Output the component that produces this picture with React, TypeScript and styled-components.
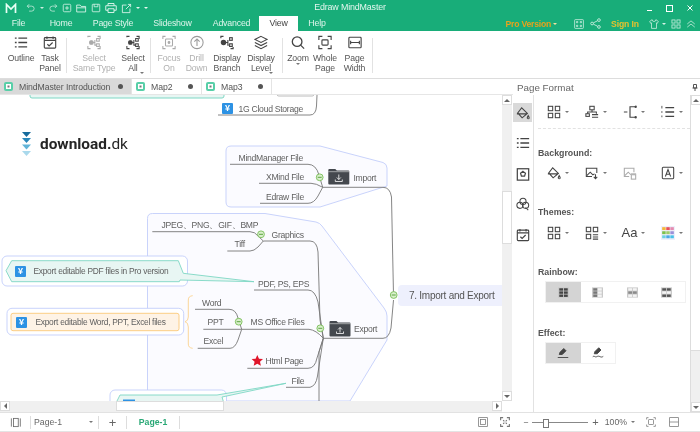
import React from "react";
import styled, { createGlobalStyle } from "styled-components";

const Global = createGlobalStyle`
  html, body { margin: 0; padding: 0; background: #fff; }
  * { box-sizing: border-box; }
`;

const FONT = `"Liberation Sans", "Noto Sans", sans-serif`;

const Window = styled.div`
  width: 700px; height: 432px; display: flex; flex-direction: column; overflow: hidden;
  background: #fff; font-family: ${FONT}; color: #555; filter: blur(0.35px);
`;
const Spacer = styled.span<{ $w: number }>`width: ${p => p.$w}px; flex: none;`;
const TitleBar = styled.div`
  height: 16px; background: #18ad79; display: flex; align-items: center; padding-left: 5px; position: relative;
`;
const QuickTools = styled.div`display: flex; align-items: center; gap: 4px; margin-left: 9px;`;
const TitleText = styled.div`
  position: absolute; left: 0; right: 0; top: 0; text-align: center; color: #e4f7ef; font-size: 8.9px; letter-spacing: -0.15px; line-height: 15px;
`;
const WinButtons = styled.div`margin-left: auto; display: flex; align-items: center; gap: 14px; padding-right: 7px;`;
const MenuBar = styled.div`height: 15px; background: #18ad79; display: flex; align-items: flex-end; font-size: 8.8px; letter-spacing: -0.2px;`;
const MenuTab = styled.div<{ $w: number; $active?: boolean }>`
  width: ${p => p.$w}px; height: 15px; text-align: center; line-height: 15px;
  color: ${p => (p.$active ? "#444" : "#dff5ec")}; background: ${p => (p.$active ? "#fff" : "transparent")};
`;
const MenuRight = styled.div`margin-left: auto; height: 15px; display: flex; align-items: center; padding-right: 4px;`;
const Pro = styled.span`color: #e8a21c; font-weight: 700; font-size: 8.6px; margin-right: 2px;`;
const SignIn = styled.span`color: #e6c22f; font-weight: 700; font-size: 8.6px; letter-spacing: -0.1px; margin: 0 10px 0 10px;`;
const Caret = styled.span<{ $c?: string; $hidden?: boolean }>`
  display: inline-block; width: 0; height: 0; border-left: 2px solid transparent; border-right: 2px solid transparent;
  border-top: 2px solid ${p => p.$c || "#777"}; visibility: ${p => (p.$hidden ? "hidden" : "visible")};
`;
const Ribbon = styled.div`height: 48px; display: flex; border-bottom: 1px solid #ddd; padding: 4px 0 0 4px;`;
const RibbonItem = styled.div<{ $w: number; $off?: boolean }>`
  width: ${p => p.$w}px; height: 42px; display: flex; flex-direction: column; align-items: center;
  font-size: 8.7px; letter-spacing: -0.12px; line-height: 10px; color: ${p => (p.$off ? "#b0b0b0" : "#555")}; text-align: center; white-space: nowrap; position: relative;
  svg { margin-bottom: 3px; height: 15px; flex: none; }
`;
const RibbonSep = styled.div<{ $ml?: number }>`width: 1px; height: 35px; background: #e2e2e2; margin: 3px 0 0 ${p => p.$ml ?? 0}px;`;
const SmallCaret = styled(Caret)`position: absolute; bottom: 3px; right: 1px;`;

const Work = styled.div`flex: 1; min-height: 0; display: flex;`;
const Left = styled.div`width: 513px; display: flex; flex-direction: column;`;
const TabBar = styled.div`height: 16px; display: flex; border-bottom: 1px solid #e6e6e6; font-size: 8.7px; letter-spacing: -0.08px;`;
const DocTab = styled.div<{ $w: number; $active?: boolean }>`
  width: ${p => p.$w}px; display: flex; align-items: center; padding-left: 4px; gap: 6px; color: #555;
  background: ${p => (p.$active ? "#d9d9d9" : "#fff")}; border-right: 1px solid #e4e4e4; white-space: nowrap;
`;
const Dot = styled.span`width: 5px; height: 5px; border-radius: 50%; background: #555; margin-left: auto; margin-right: 8px;`;
const CanvasRow = styled.div`flex: 1; display: flex; min-height: 0;`;
const Canvas = styled.div`width: 502px; position: relative; overflow: hidden; background: #fff;`;
const Wires = styled.svg`position: absolute; left: 0; top: 0;`;
const NodeText = styled.div<{ $x: number; $y: number; $s?: number; $c?: string }>`
  position: absolute; left: ${p => p.$x}px; top: ${p => p.$y - 95}px; transform: translateY(-50%);
  font-size: ${p => p.$s ?? 8.6}px; letter-spacing: -0.27px; color: ${p => p.$c ?? "#5f5f5f"}; white-space: nowrap; line-height: 12px;
`;
const RootNode = styled.div`
  position: absolute; left: 398px; top: 190px; width: 104px; height: 21px; background: #eef0fd; border-radius: 4px 0 0 4px;
  font-size: 10px; letter-spacing: -0.26px; line-height: 21px; color: #555; padding-left: 11px; white-space: nowrap;
`;
const Yuan = styled.div<{ $x: number; $y: number; $s?: number }>`
  position: absolute; left: ${p => p.$x}px; top: ${p => p.$y - 95}px; width: ${p => p.$s ?? 11}px; height: ${p => p.$s ?? 11}px;
  background: #2d92e4; color: #fff; font: 700 9px/11px "Liberation Sans", sans-serif; text-align: center; border-radius: 1px;
`;
const Logo = styled.div`
  position: absolute; left: 40px; top: 38px; font: 700 15.4px/22px Roboto, sans-serif; color: #252525;
  span { font-weight: 400; }
`;
const VScroll = styled.div`width: 11px; background: #f0f0f0; display: flex; flex-direction: column; border-right: 1px solid #fff;`;
const Arrow = styled.div<{ $dir: "up" | "down" | "left" | "right" }>`
  width: 10px; height: 10px; flex: none; background: #fff; border: 1px solid #ddd; display: flex; align-items: center; justify-content: center;
  &::after {
    content: ""; width: 0; height: 0; border: 3px solid transparent;
    ${p => p.$dir === "up" && "border-bottom: 3px solid #666; border-top-width: 0;"}
    ${p => p.$dir === "down" && "border-top: 3px solid #666; border-bottom-width: 0;"}
    ${p => p.$dir === "left" && "border-right: 3px solid #666; border-left-width: 0;"}
    ${p => p.$dir === "right" && "border-left: 3px solid #666; border-right-width: 0;"}
  }
`;
const Track = styled.div<{ $size: number; $fill?: boolean }>`
  flex: ${p => (p.$fill ? 1 : "none")}; ${p => (p.$fill ? "" : `height: ${p.$size}px;`)} min-height: 0;
`;
const Thumb = styled.div<{ $size: number }>`height: ${p => p.$size}px; flex: none; background: #fff; border: 1px solid #ddd;`;
const HScroll = styled.div`height: 11px; background: #f0f0f0; display: flex; width: 502px; padding-bottom: 1px;`;
const HThumb = styled.div`margin-left: 106px; width: 108px; background: #fff; border: 1px solid #ddd;`;

const Right = styled.div`flex: 1; display: flex; flex-direction: column; min-width: 0;`;
const PanelHead = styled.div`height: 16px; display: flex; align-items: center; padding: 0 2px 0 4px; font-size: 9.8px; color: #666; justify-content: space-between;`;
const PanelBody = styled.div`flex: 1; min-height: 0; display: flex;`;
const SideRail = styled.div`width: 21px; border-right: 1px solid #e2e2e2; display: flex; flex-direction: column; padding-top: 8px; gap: 11.5px;`;
const RailBtn = styled.div<{ $active?: boolean }>`
  width: 19px; height: 19px; display: flex; align-items: center; justify-content: center; background: ${p => (p.$active ? "#d9d9d9" : "transparent")};
`;
const Panel = styled.div`flex: 1; display: flex; flex-direction: column; padding: 8px 0 0 3px; min-width: 0;`;
const ToolRow = styled.div<{ $mt?: number }>`display: grid; grid-template-columns: repeat(4, 38px); margin-top: ${p => p.$mt ?? 0}px; height: 18px;`;
const Tool = styled.div`display: flex; align-items: center; justify-content: center; gap: 4px; padding-left: 3px;`;
const FontGlyph = styled.span`font-size: 13px; line-height: 14px; color: #444;`;
const Dashed = styled.div`border-top: 1px dashed #e2e2e2; margin: 7px 0 0 1px;`;
const Section = styled.div<{ $mt: number }>`font-size: 8.8px; font-weight: 700; color: #555; margin: ${p => p.$mt}px 0 0 1px; line-height: 12px;`;
const Seg = styled.div<{ $w: number; $mt?: number }>`
  width: ${p => p.$w}px; height: 22px; display: flex; margin: ${p => p.$mt ?? 4}px 0 0 8px; border: 1px solid #f1f1f1; padding: 0;
`;
const SegCell = styled.div<{ $active?: boolean }>`
  width: 34.5px; height: 20px; display: flex; align-items: center; justify-content: center; background: ${p => (p.$active ? "#d4d4d4" : "transparent")};
`;
const RScroll = styled.div`width: 10px; background: #f0f0f0; border-left: 1px solid #ddd; display: flex; flex-direction: column;`;
const RTrack = styled.div`height: 246px; background: #fff; border-bottom: 1px solid #ddd; flex: none;`;

const Status = styled.div`
  height: 20px; border-top: 1px solid #e2e2e2; border-bottom: 1px solid #e4e4e4; display: flex; align-items: center; font-size: 8.7px; color: #666; position: relative;
`;
const StatSep = styled.div`width: 1px; height: 13px; background: #ddd;`;
const StatCell = styled.div<{ $w: number; $c?: string; $b?: boolean }>`
  width: ${p => p.$w}px; display: flex; align-items: center; justify-content: center; color: ${p => p.$c ?? "inherit"}; font-weight: ${p => (p.$b ? 700 : 400)};
`;
const PagePicker = styled.div`width: 67px; display: flex; align-items: center; justify-content: space-between; padding: 0 5px 0 3px;`;
const AddPage = styled.div`width: 27px; text-align: center; font-size: 13px;`;
const StatRight = styled.div`margin-left: auto; display: flex; align-items: center; padding-right: 21px;`;
const PlusSign = styled.span`font-size: 11px;`;
const Slider = styled.div`width: 56px; height: 1px; background: #888; position: relative; margin: 0 4px;
  &::after { content: ""; position: absolute; left: 11px; top: -3px; width: 4px; height: 7px; background: #fff; border: 1px solid #777; }
`;

type P = { children: React.ReactNode; s?: number; c?: string; w?: number };
const G = ({ children, s = 14, c = "#444", w = 1.2 }: P) => (
  <svg width={s} height={s} viewBox="0 0 16 16" fill="none" stroke={c} strokeWidth={w}>{children}</svg>
);

const boxes = <><rect x="1.5" y="1.5" width="5" height="5" /><rect x="9.5" y="1.5" width="5" height="5" /><rect x="1.5" y="9.5" width="5" height="5" /><rect x="9.5" y="9.5" width="5" height="5" /></>;
const Ico = {
  outline: (c?: string) => <G c={c} w={1.5}><path d="M5 3h10M5 8h10M5 13h10M1 3h2M1 8h2M1 13h2" /></G>,
  task: (c?: string) => <G c={c} w={1.3}><rect x="1.5" y="2.5" width="13" height="12" rx="1" /><path d="M1.5 5.5h13M4.5 1v3M11.5 1v3M5 10l2 2 4-4" /></G>,
  sel: (c?: string) => <G c={c}><path d="M1 2V1h3M12 1h3v3M15 12v3h-3M4 15H1v-3" /><rect x="3" y="6" width="4" height="4" rx="1.5" fill={c} /><path d="M7 8h2M9 5v6h2" /><rect x="11" y="3.5" width="3" height="3" /><rect x="11" y="9.5" width="3" height="3" /></G>,
  focus: (c?: string) => <G c={c}><path d="M1 4V1h3M12 1h3v3M15 12v3h-3M4 15H1v-3" /><rect x="4" y="4" width="8" height="8" rx="1" /><circle cx="8" cy="8" r="1" fill={c} /></G>,
  drill: (c?: string) => <G c={c}><circle cx="8" cy="8" r="7" /><path d="M8 12V4.5M5 7l3-3 3 3" /></G>,
  branch: (c?: string) => <G c={c} w={1.3}><circle cx="4" cy="8" r="2.5" fill={c} /><path d="M6 8h3M9 5v6h1" /><rect x="11" y="2.5" width="3" height="3" /><rect x="11" y="9.5" width="3" height="3" /><path d="M1 3V1h3" /><path d="M12 15h3v-2" /></G>,
  layers: (c?: string) => <G c={c}><path d="M8 1l7 3.5L8 8 1 4.5zM1 8l7 3.5L15 8M1 11.5L8 15l7-3.5" /></G>,
  zoom: (c?: string) => <G c={c} w={1.5}><circle cx="7" cy="7" r="5.5" /><path d="M11 11l4 4" /></G>,
  whole: (c?: string) => <G c={c} w={1.3}><path d="M1 5V1h4M11 1h4v4M15 11v4h-4M5 15H1v-4" /><rect x="4.5" y="5" width="7" height="6" rx="1" /></G>,
  width: (c?: string) => <G c={c} w={1.3}><rect x="1" y="2" width="14" height="12" rx="1" /><path d="M3 8h10M3 6v4M13 6v4" /></G>,
  bucket: (c?: string) => <G c={c} w={1.3}><path d="M6.5 2L2 8l5 5.5 6-5zM1 9h11" /><path d="M14 11c-1 1.5-1.5 2-1 3 .5.7 1.5.7 2 0 .3-1-.3-1.5-1-3z" fill={c} /></G>,
  org: (c?: string) => <G c={c}><rect x="5.5" y="1.5" width="5" height="4" /><path d="M8 5.5V8M3 10V8h10v2" /><rect x="1" y="10" width="4" height="3" /><path d="M8 11h7M8 14h7" /></G>,
  bracket: (c?: string) => <G c={c} w={1.3}><path d="M1 8h4M14 2H8v12h6" /><circle cx="14.5" cy="2" r=".7" fill={c} /><circle cx="14.5" cy="14" r=".7" fill={c} /></G>,
  numlist: (c?: string) => <G c={c} w={1.5}><path d="M5 3h10M5 8h10M5 13h10" /><path d="M1 1v3M1 7v2M1 12v2" strokeWidth={1} /></G>,
  imgdown: (c?: string) => <G c={c}><path d="M8 12H1.5V2.5h12V8" /><path d="M2 11l4-4 3 3 2-1" /><path d="M12 9.5v5M10 12.5l2 2 2-2" /></G>,
  imgdel: (c?: string) => <G c={c}><path d="M7 12H1.5V2.5h11V7" /><path d="M2 11l4-4 3 3" /><rect x="9.5" y="10" width="5" height="5" /><path d="M9 9h6" /></G>,
  textbox: (c?: string) => <G c={c}><rect x="1.5" y="1.5" width="13" height="13" rx="1" /><path d="M5 12l3-8 3 8M6 9.5h4" /></G>,
  boxlist: (c?: string) => <G c={c}><rect x="1.5" y="1.5" width="5" height="5" /><rect x="9.5" y="1.5" width="5" height="5" /><rect x="1.5" y="9.5" width="5" height="5" /><path d="M9 10h6M9 12.5h6M9 15h6" /></G>,
  palette: () => (
    <svg width="14" height="14" viewBox="0 0 12 12"><rect width="12" height="12" fill="#eef0fb" />
      <rect x="1" y="1" width="3" height="2.5" fill="#f5b73a" /><rect x="4.5" y="1" width="3" height="2.5" fill="#e8505b" /><rect x="8" y="1" width="3" height="2.5" fill="#e58bb0" />
      <rect x="1" y="4.5" width="3" height="2.5" fill="#7cc04b" /><rect x="4.5" y="4.5" width="3" height="2.5" fill="#9ecb6a" /><rect x="8" y="4.5" width="3" height="2.5" fill="#9b8fd8" />
      <rect x="1" y="8" width="3" height="2.5" fill="#6cd0e0" /><rect x="4.5" y="8" width="3" height="2.5" fill="#4aa8e8" /><rect x="8" y="8" width="3" height="2.5" fill="#48c0e8" />
    </svg>
  ),
  rail_star: (c?: string) => <G c={c} w={1.4}><rect x="1.5" y="2" width="13" height="13" /><path d="M8 5l2.8 2.2-1 3.3H6.2l-1-3.3z" /></G>,
  clover: (c?: string) => <G c={c}><circle cx="8" cy="5" r="3.5" /><circle cx="4.5" cy="9.5" r="3.5" /><circle cx="11" cy="9.5" r="3.5" /><path d="M11 12l3 3" /></G>,
};

const Rainbow = ({ v }: { v: number }) => {
  const dark = ["#444", "#777", "#8a8a8a", "#555"][v], light = "#c9c9c9";
  const on = [
    [1, 1, 1, 1, 1, 1],
    [1, 0, 1, 0, 1, 0],
    [0, 0, 1, 1, 0, 0],
    [1, 1, 0, 0, 1, 1],
  ][v];
  return (
    <svg width="11" height="11" viewBox="0 0 13 12">
      <rect width="13" height="12" fill={light} />
      {on.map((o, i) => (
        <rect key={i} x={i % 2 ? 7 : 1.5} y={1 + Math.floor(i / 2) * 3.7} width="4.5" height="2.8" fill={o ? dark : "#f4f4f4"} />
      ))}
    </svg>
  );
};

const ToolBtn = ({ icon, caret = true }: { icon: React.ReactNode; caret?: boolean }) => (
  <Tool>{icon}<Caret $hidden={!caret} /></Tool>
);

const TabIcon = () => (
  <svg width="9" height="9" viewBox="0 0 9 9"><rect width="9" height="9" rx="2" fill="#58cfa8" /><rect x="2" y="2" width="5" height="5" fill="#fff" /><rect x="3.5" y="3.5" width="2" height="2" fill="#777" /></svg>
);

const Collapse = ({ x, y }: { x: number; y: number }) => (
  <g><circle cx={x} cy={y} r="3.4" fill="#d9f0cc" stroke="#79bd58" strokeWidth="0.9" /><path d={`M${x - 2} ${y}h4`} stroke="#4f9a33" strokeWidth="0.9" /></g>
);
const Folder = ({ x, y, up }: { x: number; y: number; up?: boolean }) => (
  <g transform={`translate(${x} ${y})`}>
    <path d="M0 2.5a1 1 0 0 1 1-1h6l1.5 1.5H20a1 1 0 0 1 1 1V16a1 1 0 0 1-1 1H1a1 1 0 0 1-1-1z" fill="#44484e" />
    <path d="M0 4.2h21" stroke="#fff" strokeWidth="0.5" />
    <path d={up ? "M10.5 13V8M8.5 10l2-2 2 2M7 12v2h7v-2" : "M10.5 7v5M8.5 10l2 2 2-2M7 12v2h7v-2"} stroke="#fff" strokeWidth="0.8" fill="none" />
  </g>
);

const Diagram = () => (
  <Wires width="502" height="306" viewBox="0 95 502 306">
    <path d="M30 95v1a2 2 0 0 0 2 2h190a2 2 0 0 0 2-2v-1" fill="#e8f6f3" stroke="#7ed7c4" />
    <path d="M277 95a2 2 0 0 0 2 1h33a2 2 0 0 0 2-1" fill="none" stroke="#bbb" />
    <path d="M218 115H310q6 0 6.5-9L317 95" fill="none" stroke="#777" strokeWidth="0.9" />
    <g transform="translate(22 132)">
      <path d="M0 0h9L4.5 5z" fill="#176b9c" /><path d="M0 6h9L4.5 11z" fill="#2a87b9" /><path d="M0 12.5h9L4.5 17.5z" fill="#62b4d8" /><path d="M0 19h9L4.5 24z" fill="#aad9ec" />
    </g>

    <path d="M231 146H320L383 162.5Q387 164 387 168V186L320 207H231Q226 207 226 202V151Q226 146 231 146Z" fill="#fbfbff" stroke="#c3cefa" strokeWidth="0.9" />
    <path d="M152.5 213.5H265L316 222Q320 223 322 226L384 308Q387 312 387 316V340L350 401H147.5V218.5Q147.5 213.5 152.5 213.5Z" fill="#fbfbff" stroke="#c3cefa" strokeWidth="0.9" />

    <g fill="none" stroke="#777" strokeWidth="0.9">
      <path d="M230 164.3H308Q316 164.3 319 175L322.7 187.3" />
      <path d="M259 183.3H311Q316 183.3 322.7 187.3" />
      <path d="M260 203.3H308Q314 203.3 318 196L322.7 187.3" />
      <path d="M322.7 187.3H383Q390 187.3 391.5 197L393.5 295" />
      <path d="M323.3 338.3H383Q389 338.3 391 328L393.5 300" />
      <path d="M152.3 231.7H250Q255 231.7 258 236L263.3 241" />
      <path d="M227.3 251H250Q254 251 258 247L263.3 241" />
      <path d="M263.3 241H310Q317 241 318 252L320 320L323.3 338.3" />
      <path d="M254 290H308Q315 290 318 302L323.3 338.3" />
      <path d="M241.7 329.3H309Q316 330 323.3 338.3" />
      <path d="M247.3 368.3H308Q315 368.3 317 358L323.3 338.3" />
      <path d="M286 387.3H310Q316 386 317.5 376L323.3 338.3" />
      <path d="M323.3 338.3L319 352V401" />
      <path d="M195 309.3H229Q236 309.3 238 318L241.7 329.3" />
      <path d="M203.3 329.3H241.7" />
      <path d="M197.7 348.3H230Q235 348.3 238 340L241.7 329.3" />
    </g>
    <path d="M192.7 295.7Q188.3 296 188.3 300V317Q188.3 321 185 321.7Q188.3 322.5 188.3 327V344Q188.3 348 192.7 348.3" fill="none" stroke="#fcd28e" strokeWidth="0.9" />

    <rect x="2" y="256" width="185.5" height="30" rx="5" fill="#fff" stroke="#c3cefa" strokeWidth="0.9" />
    <path d="M6 270.7L11.7 260.7H178.3L183.3 273.3L254 281.7L180 280L179.3 281.7H11.7Z" fill="#e8f6f3" stroke="#7ed7c4" strokeWidth="0.9" />
    <rect x="7" y="308.3" width="176.7" height="26.7" rx="5" fill="#fff" stroke="#c3cefa" strokeWidth="0.9" />
    <rect x="11" y="313.3" width="168" height="17.4" rx="2" fill="#fef3e6" stroke="#fcc878" strokeWidth="0.9" />
    <rect x="110" y="390" width="116.5" height="30" rx="5" fill="#fff" stroke="#c3cefa" strokeWidth="0.9" />
    <path d="M117 401L120 395H217L286 383.3L222 397L226 410H117Z" fill="#e8f6f3" stroke="#7ed7c4" strokeWidth="0.9" />
    <rect x="123" y="399.5" width="12" height="3" fill="#2d92e4" />

    <path d="M257.3 355l1.7 3.7 4 .4-3 2.7.9 4-3.6-2-3.6 2 .9-4-3-2.7 4-.4z" fill="#e0162b" />
    <Collapse x={319.7} y={177.3} />
    <Collapse x={261} y={234.3} />
    <Collapse x={238.7} y={321.7} />
    <Collapse x={320.3} y={328.3} />
    <Collapse x={393.7} y={295} />
    <Folder x={328.3} y={167.5} />
    <Folder x={329.5} y={319.5} up />
  </Wires>
);

export default function App() {
  return (
    <Window>
      <Global />
      <TitleBar>
        <svg width="12" height="11" viewBox="0 0 12 11" fill="none" stroke="#e8fff5" strokeWidth="1.7"><path d="M1.5 10V1.5L6 6l4.5-4.5V10" /></svg>
        <TitleText>Edraw MindMaster</TitleText>
        <QuickTools>
          <G s={10} c="#cdeee0"><path d="M5 2L2 5l3 3M2 5h7a4 4 0 0 1 0 8H5" /></G>
          <Caret $c="#cdeee0" />
          <G s={10} c="#cdeee0"><path d="M11 2l3 3-3 3M14 5H7a4 4 0 0 0 0 8h4" /></G>
          <G s={10} c="#e6f8f0"><rect x="2" y="2" width="12" height="12" rx="2" /><path d="M8 5v6M5 8h6" /></G>
          <G s={11} c="#e6f8f0"><path d="M1 13V3h5l1.5 2H14v8zM1 7h13" /></G>
          <G s={10} c="#e6f8f0"><rect x="2" y="2" width="12" height="12" rx="1" /><path d="M5 2v4h6V2" /></G>
          <G s={12} c="#e6f8f0"><path d="M4 5V2h8v3M4 11H1V5h14v6h-3M4 9h8v5H4z" /></G>
          <G s={11} c="#e6f8f0"><path d="M13 8v6H2V3h6M7 9l7-7M10 2h4v4" /></G>
          <Caret $c="#e6f8f0" />
          <Caret $c="#e6f8f0" />
        </QuickTools>
        <WinButtons>
          <svg width="5" height="5" viewBox="0 0 5 5"><path d="M0 4.5h5" stroke="#fff" /></svg>
          <svg width="7" height="7" viewBox="0 0 7 7"><rect x=".5" y=".5" width="6" height="6" fill="none" stroke="#fff" /></svg>
          <svg width="6" height="6" viewBox="0 0 6 6"><path d="M.5.5l5 5M5.5.5l-5 5" stroke="#fff" /></svg>
        </WinButtons>
      </TitleBar>
      <MenuBar>
        <MenuTab $w={37}>File</MenuTab>
        <MenuTab $w={48}>Home</MenuTab>
        <MenuTab $w={56}>Page Style</MenuTab>
        <MenuTab $w={63}>Slideshow</MenuTab>
        <MenuTab $w={55}>Advanced</MenuTab>
        <MenuTab $w={39} $active>View</MenuTab>
        <MenuTab $w={38}>Help</MenuTab>
        <MenuRight>
          <Pro>Pro Version</Pro>
          <Caret $c="#f0e0a0" />
          <Spacer $w={17} />
          <G s={10} c="#d5f2e6"><rect x="1" y="1" width="14" height="14" rx="1" /><path d="M4 4h2v2H4zM10 4h2v2h-2zM4 10h2v2H4zM10 10h2v2h-2z" /></G>
          <Spacer $w={6} />
          <G s={11} c="#d5f2e6"><circle cx="3" cy="8" r="2" /><circle cx="13" cy="3" r="2" /><circle cx="13" cy="13" r="2" /><path d="M5 7l6-3M5 9l6 3" /></G>
          <SignIn>Sign In</SignIn>
          <G s={10} c="#d5f2e6"><path d="M5 1L1 4l2 3 1-1v9h8V6l1 1 2-3-4-3a3 3 0 0 1-6 0z" /></G>
          <Spacer $w={3} />
          <Caret $c="#d5f2e6" />
          <Spacer $w={5} />
          <G s={10} c="#d5f2e6">{boxes}</G>
          <Spacer $w={5} />
          <G s={10} c="#d5f2e6"><path d="M2 8l6-5 6 5M2 13l6-5 6 5" /></G>
        </MenuRight>
      </MenuBar>
      <Ribbon>
        <RibbonItem $w={34}>{Ico.outline()}Outline</RibbonItem>
        <RibbonItem $w={24}>{Ico.task()}Task<br />Panel</RibbonItem>
        <RibbonSep $ml={4} />
        <RibbonItem $w={54} $off>{Ico.sel("#aaa")}Select<br />Same Type</RibbonItem>
        <RibbonItem $w={24}>{Ico.sel("#444")}Select<br />All<SmallCaret /></RibbonItem>
        <RibbonSep $ml={5} />
        <RibbonItem $w={36} $off>{Ico.focus("#aaa")}Focus<br />On</RibbonItem>
        <RibbonItem $w={19} $off>{Ico.drill("#999")}Drill<br />Down</RibbonItem>
        <RibbonItem $w={42}>{Ico.branch("#444")}Display<br />Branch</RibbonItem>
        <RibbonItem $w={26}>{Ico.layers("#444")}Display<br />Level<SmallCaret /></RibbonItem>
        <RibbonSep $ml={8} />
        <RibbonItem $w={30}>{Ico.zoom("#444")}Zoom<br /><Caret /></RibbonItem>
        <RibbonItem $w={24}>{Ico.whole("#444")}Whole<br />Page</RibbonItem>
        <RibbonItem $w={35}>{Ico.width("#444")}Page<br />Width</RibbonItem>
        <RibbonSep />
      </Ribbon>
      <Work>
        <Left>
          <TabBar>
            <DocTab $w={132} $active><TabIcon />MindMaster Introduction<Dot /></DocTab>
            <DocTab $w={70}><TabIcon />Map2<Dot /></DocTab>
            <DocTab $w={70}><TabIcon />Map3<Dot /></DocTab>
          </TabBar>
          <CanvasRow>
            <Canvas>
              <Diagram />
              <Logo>download.<span>dk</span></Logo>
              <Yuan $x={222} $y={103}>¥</Yuan>
              <NodeText $x={238.5} $y={108.5}>1G Cloud Storage</NodeText>
              <NodeText $x={238.5} $y={157.5}>MindManager File</NodeText>
              <NodeText $x={266} $y={177}>XMind File</NodeText>
              <NodeText $x={266} $y={196.5}>Edraw File</NodeText>
              <NodeText $x={353.5} $y={177.5}>Import</NodeText>
              <NodeText $x={161.5} $y={224.5}>JPEG、PNG、GIF、BMP</NodeText>
              <NodeText $x={234.5} $y={243.5}>Tiff</NodeText>
              <NodeText $x={271.5} $y={234.5}>Graphics</NodeText>
              <NodeText $x={258} $y={283.5}>PDF, PS, EPS</NodeText>
              <Yuan $x={15} $y={266}>¥</Yuan>
              <NodeText $x={33.5} $y={271} $s={8.4}>Export editable PDF files in Pro version</NodeText>
              <NodeText $x={202} $y={302.5}>Word</NodeText>
              <NodeText $x={207.5} $y={322}>PPT</NodeText>
              <NodeText $x={203.5} $y={341}>Excel</NodeText>
              <Yuan $x={16} $y={317}>¥</Yuan>
              <NodeText $x={35.5} $y={322} $s={8.4}>Export editable Word, PPT, Excel files</NodeText>
              <NodeText $x={250.5} $y={321.5}>MS Office Files</NodeText>
              <NodeText $x={354} $y={328.5}>Export</NodeText>
              <NodeText $x={265.5} $y={361}>Html Page</NodeText>
              <NodeText $x={291.5} $y={381}>File</NodeText>
              <RootNode>7. Import and Export</RootNode>
            </Canvas>
            <VScroll>
              <Arrow $dir="up" />
              <Track $size={86} />
              <Thumb $size={53} />
              <Track $size={0} $fill />
              <Arrow $dir="down" />
            </VScroll>
          </CanvasRow>
          <HScroll>
            <Arrow $dir="left" />
            <HThumb />
            <Track $size={0} $fill />
            <Arrow $dir="right" />
          </HScroll>
        </Left>
        <Right>
          <PanelHead>
            Page Format
            <svg width="6" height="7" viewBox="0 0 6 7" fill="none" stroke="#555"><path d="M1.5.5h3V4h-3zM.5 4h5M3 4v3" /></svg>
          </PanelHead>
          <PanelBody>
            <SideRail>
              <RailBtn $active>{Ico.bucket()}</RailBtn>
              <RailBtn>{Ico.outline()}</RailBtn>
              <RailBtn>{Ico.rail_star()}</RailBtn>
              <RailBtn>{Ico.clover()}</RailBtn>
              <RailBtn>{Ico.task()}</RailBtn>
            </SideRail>
            <Panel>
              <ToolRow>
                <ToolBtn icon={<G>{boxes}</G>} />
                <ToolBtn icon={Ico.org()} />
                <ToolBtn icon={Ico.bracket()} />
                <ToolBtn icon={Ico.numlist()} />
              </ToolRow>
              <Dashed />
              <Section $mt={18}>Background:</Section>
              <ToolRow $mt={5}>
                <ToolBtn icon={Ico.bucket()} />
                <ToolBtn icon={Ico.imgdown()} />
                <ToolBtn icon={Ico.imgdel("#aaa")} caret={false} />
                <ToolBtn icon={Ico.textbox()} />
              </ToolRow>
              <Section $mt={24}>Themes:</Section>
              <ToolRow $mt={6}>
                <ToolBtn icon={<G>{boxes}</G>} />
                <ToolBtn icon={Ico.boxlist()} />
                <ToolBtn icon={<FontGlyph>Aa</FontGlyph>} />
                <ToolBtn icon={Ico.palette()} />
              </ToolRow>
              <Section $mt={24}>Rainbow:</Section>
              <Seg $w={141} $mt={3}>
                <SegCell $active><Rainbow v={0} /></SegCell>
                <SegCell><Rainbow v={1} /></SegCell>
                <SegCell><Rainbow v={2} /></SegCell>
                <SegCell><Rainbow v={3} /></SegCell>
              </Seg>
              <Section $mt={24}>Effect:</Section>
              <Seg $w={71} $mt={3}>
                <SegCell $active><G s={12}><path d="M3 10l1-3 5-5 3 3-5 5zM1 14h14" fill="#444" /></G></SegCell>
                <SegCell><G s={12}><path d="M3 9l1-3 5-5 3 3-5 5z" fill="#444" /><path d="M1 13c2-2 3 1 5 0s3-1 5 0 3 0 4-.5" /></G></SegCell>
              </Seg>
            </Panel>
            <RScroll>
              <Arrow $dir="up" />
              <RTrack />
              <Track $size={0} $fill />
              <Arrow $dir="down" />
            </RScroll>
          </PanelBody>
        </Right>
      </Work>
      <Status>
        <StatCell $w={30}><G s={11} c="#666"><rect x="5" y="2" width="7" height="12" /><path d="M2 2v12M15 2v12" /></G></StatCell>
        <StatSep />
        <PagePicker>Page-1<Caret /></PagePicker>
        <StatSep />
        <AddPage>+</AddPage>
        <StatSep />
        <StatCell $w={52} $c="#2aa876" $b>Page-1</StatCell>
        <StatSep />
        <StatRight>
          <G s={10} c="#777"><rect x="1" y="1" width="14" height="14" /><rect x="4" y="4" width="8" height="8" /></G>
          <Spacer $w={12} />
          <G s={10} c="#777" w={1.8}><path d="M1 5V1h4M11 1h4v4M15 11v4h-4M5 15H1v-4M5 5l2 2M11 5L9 7M5 11l2-2M11 11L9 9" /></G>
          <Spacer $w={13} />
          <span>−</span>
          <Slider />
          <PlusSign>+</PlusSign>
          <Spacer $w={6} />
          <span>100%</span>
          <Spacer $w={4} />
          <Caret />
          <Spacer $w={11} />
          <G s={10} c="#777"><path d="M1 4V1h3M12 1h3v3M15 12v3h-3M4 15H1v-3" /><rect x="4" y="4" width="8" height="8" rx="1" /></G>
          <Spacer $w={13} />
          <G s={10} c="#777"><rect x="1" y="1" width="14" height="14" /><path d="M1 8h14" /></G>
        </StatRight>
      </Status>
    </Window>
  );
}
